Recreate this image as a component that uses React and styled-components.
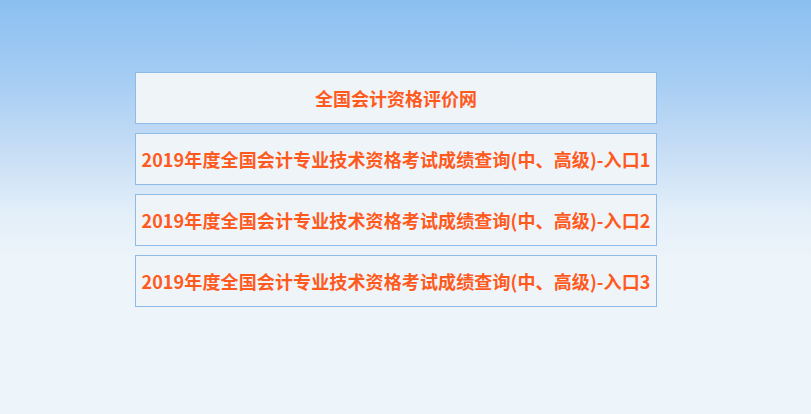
import React from 'react'
import styled, { createGlobalStyle } from 'styled-components'

const GlobalStyle = createGlobalStyle`
  html, body {
    margin: 0;
    padding: 0;
  }
  body {
    min-height: 414px;
    background: linear-gradient(#8bbff1 0, #a6cdf3 80px, #c6ddf5 150px, #e4eff9 215px, #edf4fa 260px, #edf4fa 100%);
    font-family: "Microsoft YaHei", "Noto Sans CJK SC", "Noto Sans", sans-serif;
  }
`

const Page = styled.div`
  padding-top: 72px;
  min-height: 414px;
  box-sizing: border-box;
`

const List = styled.ul`
  list-style: none;
  margin: 0 0 0 135px;
  padding: 0;
  width: 522px;
  display: flex;
  flex-direction: column;
  gap: 9px;
`

const Entry = styled.li`
  height: 52px;
  box-sizing: border-box;
  border: 1px solid #8fbbe8;
  background: #eff4f8;
  display: flex;
  align-items: center;
  justify-content: center;
`

const EntryLink = styled.a`
  color: #ff5a1e;
  font-size: 18px;
  font-weight: bold;
  text-decoration: none;
  white-space: nowrap;
  letter-spacing: ${p => (p.$wide ? '0.12px' : '0')};
`

const links = [
  '2019年度全国会计专业技术资格考试成绩查询(中、高级)-入口1',
  '2019年度全国会计专业技术资格考试成绩查询(中、高级)-入口2',
  '2019年度全国会计专业技术资格考试成绩查询(中、高级)-入口3',
]

const App = () => {
  return (
    <Page>
      <GlobalStyle />
      <List>
        <Entry>
          <EntryLink href="#">全国会计资格评价网</EntryLink>
        </Entry>
        {links.map(text => (
          <Entry key={text}>
            <EntryLink href="#" $wide>{text}</EntryLink>
          </Entry>
        ))}
      </List>
    </Page>
  )
}

export default App
